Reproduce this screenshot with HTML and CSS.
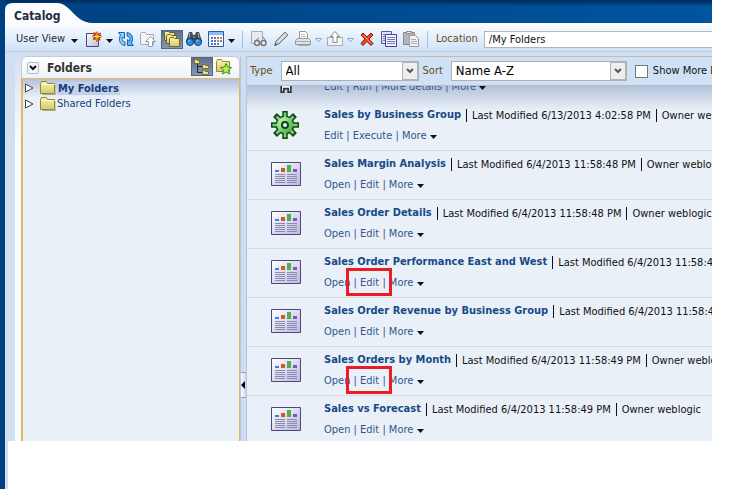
FILE: index.html
```html
<!DOCTYPE html>
<html lang="en">
<head>
<meta charset="utf-8">
<title>Catalog</title>
<link rel="stylesheet" href="styles.css">
</head>
<body>
<svg class="defs" aria-hidden="true">
  <defs>
    <linearGradient id="gPage" x1="0" y1="0" x2="1" y2="1"><stop offset="0" stop-color="#fff"/><stop offset="1" stop-color="#b9b9dc"/></linearGradient>
    <linearGradient id="gGear" x1="0" y1="0" x2="1" y2="1"><stop offset="0" stop-color="#d5fbc8"/><stop offset="1" stop-color="#35a535"/></linearGradient>
    <linearGradient id="gFold" x1="0" y1="0" x2="0" y2="1"><stop offset="0" stop-color="#f8f3b4"/><stop offset="1" stop-color="#d3cb6c"/></linearGradient>
    <symbol id="caret" viewBox="0 0 7 4"><path d="M0 0h7L3.5 4z" fill="#111"/></symbol>
    <symbol id="caret-off" viewBox="0 0 7 5"><path d="M.5 .5h6L3.5 4z" fill="#e8f1fc" stroke="#8ea6cf"/></symbol>
    <symbol id="folder" viewBox="0 0 16 14"><path d="M.5 12.5V2.500l1-2h5l1 2h7v10z" fill="url(#gFold)" stroke="#938a2c"/><path d="M1.500 3.500h13" stroke="#fffbd0"/><path d="M2 13.500h14V4" fill="none" stroke="#77713f" stroke-opacity=".5"/></symbol>
    <symbol id="report" viewBox="0 0 30 24">
      <path d="M.5 .5h29v23H.5z" fill="url(#gPage)" stroke="#494980"/>
      <path d="M4 8h4v2H4z" fill="#3d7df0"/><path d="M10 6h4v4h-4z" fill="#cf5b22"/><path d="M16 3h4v7h-4z" fill="#4bb24b"/><path d="M22 7h4v3h-4z" fill="#8351c7"/>
      <path d="M4 12.500h10M4 14.500h10M4 16.500h10M4 18.500h10M4 20.500h10M16 12.500h10M16 14.500h10M16 16.500h10M16 18.500h10M16 20.500h10" stroke="#8c88b8"/>
    </symbol>
    <symbol id="gear" viewBox="0 0 28 28">
      <g stroke="#0d4a12" stroke-width="5.500"><path d="M14 0v28M0 14h28M4 4l20 20M24 4L4 24"/></g>
      <circle cx="14" cy="14" r="9.500" fill="#0d4a12"/>
      <g stroke="#6fd463" stroke-width="2.500"><path d="M14 1.500v25M1.500 14h25M5.500 5.500l17 17M22.500 5.500l-17 17"/></g>
      <circle cx="14" cy="14" r="8" fill="url(#gGear)"/>
      <circle cx="14" cy="14" r="3" fill="#e9f0f8" stroke="#0d4a12" stroke-width="2"/>
    </symbol>
    <symbol id="new" viewBox="0 0 16 16"><path d="M.5 2.500h12v13H.5z" fill="url(#gPage)" stroke="#494970"/><path d="M11 0l1.500 2.500L15 1.500 14.500 4 16 5.500l-2 1.500.5 2.500-2.500-.5-1.500 2-1-2.500L7 9l.5-2.500L6 5l2-1.500L7.500 1 10 2z" fill="#b8320f"/><path d="M11 1.500v8M7 5.500h8M9 3.500l4 4M13 3.500l-4 4" stroke="#ffd83a"/></symbol>
    <symbol id="refresh" viewBox="0 0 16 16"><path d="M.5 1.500h6v6l-2-1.500c-1 2-.5 4 2.500 5v3.500C2 14 0 9 2.500 4z" fill="#8fd0fb" stroke="#1464b5"/><path d="M15.500 14.500h-6v-6l2 1.500c1-2 .5-4-2.500-5V1.500C14 2 16 7 13.500 12z" fill="#5fb2f3" stroke="#1464b5"/></symbol>
    <symbol id="up-folder" viewBox="0 0 16 16"><path d="M.5 13.500v-11l1-1h4l1 2h7v10z" fill="#f4f5f7" stroke="#a8abb0"/><path d="M10.500 5.500l5 5h-3v5h-4v-5h-3z" fill="#fff" stroke="#999ca1"/></symbol>
    <symbol id="folders" viewBox="0 0 16 16"><g fill="url(#gFold)" stroke="#6b641c"><path d="M.5 9.500v-8l1-1h3l1 1h5v8z"/><path d="M2.500 12.500v-8l1-1h3l1 1h5v8z"/><path d="M5.500 15.500v-8l1-1h3l1 1h5v8z"/></g></symbol>
    <symbol id="binoculars" viewBox="0 0 16 16"><path d="M3 1h3l1 3h2l1-3h3l3 9-2 3H9L8 9l-1 4H2l-2-3z" fill="#44484f"/><path d="M4 2l-1 5M12 2l1 5M7 6h2" stroke="#a5abb5"/><circle cx="4" cy="11" r="3.500" fill="#2990e6" stroke="#14375f"/><circle cx="12" cy="11" r="3.500" fill="#2990e6" stroke="#14375f"/><path d="M2.500 10l1.500-1M10.500 10l1.500-1" stroke="#b5e0ff"/></symbol>
    <symbol id="calendar" viewBox="0 0 16 16"><path d="M.5 .5h15v15H.5z" fill="#f7fbff" stroke="#345b9f"/><path d="M1 1h14v3H1z" fill="#8bbcf2"/><path d="M3 6h2v2H3zM3 9h2v2H3zM6 12h2v2H6z" fill="#4a78df"/><path d="M6 6h2v2H6zM6 9h2v2H6zM3 12h2v2H3z" fill="#6a6ad5"/><path d="M9 6h2v2H9zM12 6h2v2h-2zM9 9h2v2H9z" fill="#ef6e2e"/><path d="M12 9h2v2h-2zM9 12h2v2H9z" fill="#3ca6a0"/></symbol>
    <symbol id="preview" viewBox="0 0 16 16"><path d="M.5 .5h11v12H.5z" fill="#e9ebee" stroke="#aaadb2"/><path d="M4 10l4-3M15 10l-3-4" stroke="#777"/><circle cx="6" cy="12" r="2.500" fill="#eee" stroke="#777" stroke-width="1.500"/><circle cx="12.500" cy="12" r="2.500" fill="#eee" stroke="#777" stroke-width="1.500"/></symbol>
    <symbol id="pencil" viewBox="0 0 16 16"><path d="M2 14l1-4 9-9 3 3-9 9z" fill="#c6c8cb" stroke="#777"/><path d="M5 11l8-8" stroke="#f3f3f3"/><path d="M1 15l1.500-3 1.500 2z" fill="#444"/></symbol>
    <symbol id="print" viewBox="0 0 16 16"><path d="M4.500 8V.5h6l2 2V8z" fill="#fff" stroke="#999"/><path d="M6 3.500h4M6 5.500h5" stroke="#bbb"/><path d="M.5 13.500v-4l2-2h11l2 2v4z" fill="#e0e1e3" stroke="#999"/><path d="M1 10.500h14M3 14.500h12" stroke="#aaa"/></symbol>
    <symbol id="upload" viewBox="0 0 16 16"><path d="M.5 14.500v-8h15v8z" fill="#f2f2f2" stroke="#aaa"/><path d="M8 .5l4.500 5h-2.500v6H6v-6H3.500z" fill="#fff" stroke="#888"/></symbol>
    <symbol id="delete" viewBox="0 0 16 16"><path d="M2 4l2-2 4 4 4-4 2 2-4 4 4 4.500L12 14.500l-4-4-4 4-2-2L6 8z" fill="#f5451e" stroke="#8e150a"/><path d="M4 4l8 8" stroke="#ff9a75"/></symbol>
    <symbol id="copy" viewBox="0 0 16 16"><path d="M.5 .5h10v12H.5z" fill="#dfe0f6" stroke="#5657a0"/><path d="M4.500 3.500h11v12h-11z" fill="#f3f3ff" stroke="#45468f"/><path d="M2 3.500h2M2 5.500h2M2 7.500h2M2 9.500h2M6 6.500h8M6 8.500h8M6 10.500h8M6 12.500h8" stroke="#7778b8"/></symbol>
    <symbol id="paste" viewBox="0 0 16 16"><path d="M.5 1.500h11v12H.5z" fill="#b5b7ba" stroke="#888"/><path d="M3.500 .5h5v2h-5z" fill="#eee" stroke="#888"/><path d="M6.500 4.500h6l3 3v8h-9z" fill="#f3f3f3" stroke="#999"/><path d="M8 8.500h5M8 10.500h6M8 12.500h6" stroke="#aaa"/></symbol>
    <symbol id="tree" viewBox="0 0 16 16"><path d="M3.500 5v8.500H9M3.500 7.500H9" fill="none" stroke="#20283a"/><g fill="#e9e291" stroke="#777022"><path d="M.5 4.500v-4h2l1 1h2v3z"/><path d="M8.500 9.500v-4h2l1 1h3v3z"/><path d="M8.500 15.500v-4h2l1 1h3v3z"/></g></symbol>
    <symbol id="fav" viewBox="0 0 16 16"><path d="M.5 12.500v-10l1-2h4l1 2h7v10z" fill="url(#gFold)" stroke="#938a2c"/><path d="M10 4.500l1.500 3.500 4 .5-3 2.500 1 4-3.500-2-3.500 2 1-4-3-2.500 4-.5z" fill="#b5ef55" stroke="#3f8c1c"/></symbol>
    <symbol id="chev" viewBox="0 0 8 6"><path d="M1 1l3 3 3-3" fill="none" stroke="currentColor" stroke-width="2"/></symbol>
    <symbol id="expand" viewBox="0 0 9 10"><path d="M.5 1v8L8 5z" fill="#fff" stroke="#444"/></symbol>
    <symbol id="home" viewBox="0 0 14 16"><path d="M1.500 15V6L7 1l5.500 5v9h-3v-4h-5v4z" fill="#fff" stroke="#333" stroke-width="2"/></symbol>
  </defs>
</svg>

<div class="app">
  <header class="banner"><h1 class="tab"><svg class="tab-shape" viewBox="0 0 86 20" preserveAspectRatio="none" aria-hidden="true"><path d="M0 20V7Q0 0 8 0H52C65 0 70 19 86 20z" fill="#fcfdff"/></svg><span>Catalog</span></h1></header>

  <div class="toolbar">
    <button class="user-view">User View <svg class="caret"><use href="#caret"/></svg></button>
    <button class="tool" aria-label="New"><svg><use href="#new"/></svg></button>
    <button class="drop" aria-label="New options"><svg class="caret"><use href="#caret"/></svg></button>
    <button class="tool" aria-label="Refresh"><svg><use href="#refresh"/></svg></button>
    <button class="tool" aria-label="Up"><svg><use href="#up-folder"/></svg></button>
    <button class="tool pressed" aria-label="Folders"><svg><use href="#folders"/></svg></button>
    <button class="tool" aria-label="Search"><svg><use href="#binoculars"/></svg></button>
    <button class="tool" aria-label="View"><svg><use href="#calendar"/></svg></button>
    <button class="drop" aria-label="View options"><svg class="caret"><use href="#caret"/></svg></button>
    <span class="rule"></span>
    <button class="tool" aria-label="Preview"><svg><use href="#preview"/></svg></button>
    <button class="tool" aria-label="Edit"><svg><use href="#pencil"/></svg></button>
    <button class="tool" aria-label="Print"><svg><use href="#print"/></svg></button>
    <button class="drop" aria-label="Print options"><svg class="caret-off"><use href="#caret-off"/></svg></button>
    <button class="tool" aria-label="Export"><svg><use href="#upload"/></svg></button>
    <button class="drop" aria-label="Export options"><svg class="caret-off"><use href="#caret-off"/></svg></button>
    <button class="tool" aria-label="Delete"><svg><use href="#delete"/></svg></button>
    <button class="tool" aria-label="Copy"><svg><use href="#copy"/></svg></button>
    <button class="tool" aria-label="Paste"><svg><use href="#paste"/></svg></button>
    <span class="rule"></span>
    <label class="label" for="location">Location</label>
    <input class="location" id="location" type="text" value="/My Folders">
  </div>

  <div class="workspace">
    <aside class="sidebar">
      <div class="side-head">
        <button class="collapse" aria-label="Collapse"><svg><use href="#chev"/></svg></button>
        <h2>Folders</h2>
        <button class="tool pressed" aria-label="Tree"><svg><use href="#tree"/></svg></button>
        <button class="tool" aria-label="Favorites"><svg><use href="#fav"/></svg></button>
      </div>
      <nav class="tree">
        <a class="node selected" href="#my"><svg class="expand"><use href="#expand"/></svg><svg class="folder"><use href="#folder"/></svg><span>My Folders</span></a>
        <a class="node" href="#shared"><svg class="expand"><use href="#expand"/></svg><svg class="folder"><use href="#folder"/></svg><span>Shared Folders</span></a>
      </nav>
    </aside>

    <div class="splitter"><button class="grip" aria-label="Hide folders"><svg viewBox="0 0 4 8"><path d="M4 0v8L0 4z"/></svg></button></div>

    <main class="content">
      <div class="filters">
        <label class="label" for="type">Type</label>
        <span class="select type"><select id="type"><option>All</option></select><span class="select-arrow"><svg><use href="#chev"/></svg></span></span>
        <label class="label" for="sort">Sort</label>
        <span class="select sort"><select id="sort"><option>Name A-Z</option></select><span class="select-arrow"><svg><use href="#chev"/></svg></span></span>
        <input class="check" id="details" type="checkbox"><label class="check-label" for="details">Show More Details</label>
      </div>

      <div class="list-view">
      <ul class="list">
        <li class="item partial"><svg class="home"><use href="#home"/></svg><div class="info"><p class="links"><a href="#">Edit</a> | <a href="#">Run</a> | <a href="#">More details</a> | <a href="#">More <svg class="more"><use href="#caret"/></svg></a></p></div></li>
        <li class="item"><svg class="gear"><use href="#gear"/></svg><div class="info"><p class="title"><a href="#">Sales by Business Group</a><span>Last Modified 6/13/2013 4:02:58 PM</span><span>Owner weblogic</span></p><p class="links"><a href="#">Edit</a> | <a href="#">Execute</a> | <a href="#">More <svg class="more"><use href="#caret"/></svg></a></p></div></li>
        <li class="item"><svg class="report"><use href="#report"/></svg><div class="info"><p class="title"><a href="#">Sales Margin Analysis</a><span>Last Modified 6/4/2013 11:58:48 PM</span><span>Owner weblogic</span></p><p class="links"><a href="#">Open</a> | <a href="#">Edit</a> | <a href="#">More <svg class="more"><use href="#caret"/></svg></a></p></div></li>
        <li class="item"><svg class="report"><use href="#report"/></svg><div class="info"><p class="title"><a href="#">Sales Order Details</a><span>Last Modified 6/4/2013 11:58:48 PM</span><span>Owner weblogic</span></p><p class="links"><a href="#">Open</a> | <a href="#">Edit</a> | <a href="#">More <svg class="more"><use href="#caret"/></svg></a></p></div></li>
        <li class="item"><svg class="report"><use href="#report"/></svg><div class="info"><p class="title"><a href="#">Sales Order Performance East and West</a><span>Last Modified 6/4/2013 11:58:49 PM</span><span>Owner weblogic</span></p><p class="links"><a href="#">Open</a> | <a class="marked" href="#">Edit</a> | <a href="#">More <svg class="more"><use href="#caret"/></svg></a></p></div></li>
        <li class="item"><svg class="report"><use href="#report"/></svg><div class="info"><p class="title"><a href="#">Sales Order Revenue by Business Group</a><span>Last Modified 6/4/2013 11:58:49 PM</span><span>Owner weblogic</span></p><p class="links"><a href="#">Open</a> | <a href="#">Edit</a> | <a href="#">More <svg class="more"><use href="#caret"/></svg></a></p></div></li>
        <li class="item"><svg class="report"><use href="#report"/></svg><div class="info"><p class="title"><a href="#">Sales Orders by Month</a><span>Last Modified 6/4/2013 11:58:49 PM</span><span>Owner weblogic</span></p><p class="links"><a href="#">Open</a> | <a class="marked" href="#">Edit</a> | <a href="#">More <svg class="more"><use href="#caret"/></svg></a></p></div></li>
        <li class="item last"><svg class="report"><use href="#report"/></svg><div class="info"><p class="title"><a href="#">Sales vs Forecast</a><span>Last Modified 6/4/2013 11:58:49 PM</span><span>Owner weblogic</span></p><p class="links"><a href="#">Open</a> | <a href="#">Edit</a> | <a href="#">More <svg class="more"><use href="#caret"/></svg></a></p></div></li>
      </ul>
      </div>
    </main>
  </div>
  <footer class="foot"></footer>
</div>
</body>
</html>
```
FILE: styles.css
```css
* { box-sizing: border-box; }
body { margin: 0; background: #fff; font: 11px/16px "DejaVu Sans Condensed", "DejaVu Sans", sans-serif; color: #111; overflow: hidden; }
h1, h2, p, ul { margin: 0; padding: 0; list-style: none; }
a { color: #34568c; text-decoration: none; }
button { border: 0; padding: 0; background: none; font: inherit; color: inherit; }
svg { display: block; flex: none; }
.defs { position: absolute; width: 0; height: 0; }

.app { margin-right: 26px; border-left: 5px solid #004080; background: #d0dff2; overflow: hidden; }
.banner { height: 23px; padding-top: 3px; background: linear-gradient(#002a5c, #00468a 5px, #00468a00 6px), linear-gradient(90deg, #004080, #00559f); }
.tab { position: relative; width: 86px; height: 20px; font-size: 12px; line-height: 26px; color: #222c3c; padding-left: 9px; }
.tab-shape { position: absolute; inset: 0; width: 100%; height: 100%; }
.tab span { position: relative; }

.toolbar { display: flex; align-items: center; gap: 6px; height: 29px; padding: 4px 0 0 11px; background: linear-gradient(#fcfdff, #e4f0fd 50%, #cfe2f8); border-bottom: 1px solid #bcc8dc; white-space: nowrap; overflow: hidden; }
.user-view { display: flex; align-items: center; justify-content: space-between; width: 62px; margin-right: 2px; color: #222c3c; }
.caret { width: 7px; height: 4px; margin-top: 3px; }
.caret-off { width: 7px; height: 5px; margin-top: 3px; }
.drop { width: 6px; margin-left: -2px; flex: none; }
.tool { display: flex; align-items: center; justify-content: center; width: 16px; height: 19px; flex: none; }
.tool svg { width: 16px; height: 16px; }
.pressed { width: 22px; background: linear-gradient(#5f6f8c, #8797b3); border: 1px solid #56657f; margin: 0 -3px 0 -1px; }
.rule { width: 1px; height: 17px; margin: 0 2px; background: #a9bcd8; flex: none; }
.label { color: #6b4f18; }
.location { flex: 1; min-width: 0; height: 17px; padding: 0 4px; border: 1px solid #b5b5b5; border-right: 0; background: #fff; font: inherit; color: #111; }

.workspace { display: flex; height: 389px; margin-left: 10px; padding-top: 4px; background: linear-gradient(#d5dff0, #d0dff2); border-top-left-radius: 6px; }
.sidebar { display: flex; flex-direction: column; width: 225px; padding-left: 6px; background: linear-gradient(#d9e1ef, #fbfcfe 90px); border-top-left-radius: 6px; flex: none; }
.side-head { display: flex; align-items: center; gap: 6px; height: 22px; padding: 0 7px 0 5px; border: 1px solid #c3cbd9; border-bottom: 0; border-radius: 6px 6px 0 0; background: linear-gradient(#fff, #edf2f9); }
.side-head h2 { flex: 1; font-size: 12px; line-height: 16px; color: #333; padding-left: 2px; }
.side-head .tool { margin-bottom: 2px; }
.collapse { display: flex; align-items: center; justify-content: center; width: 12px; height: 12px; border: 1px solid #b0bccd; border-radius: 2px; background: #f2f6fc; }
.collapse svg { width: 8px; height: 6px; }
.tree { flex: 1; padding: 1px 2px; border: solid #e0b862; border-width: 1px 1px 0 2px; background: linear-gradient(#b4c1da, #e9f0f8 18px); }
.node { display: flex; align-items: center; height: 16px; color: #163c7c; }
.expand { width: 9px; height: 10px; margin-right: 6px; }
.folder { width: 16px; height: 14px; margin-right: 1px; }
.selected { font-weight: bold; }
.selected span { background: #c3d2e8; line-height: 13px; padding: 0 1px; }

.splitter { display: flex; align-items: flex-start; width: 7px; border: solid #b9c4d8; border-width: 0 1px; background: #cfdef3; flex: none; }
.grip { display: flex; align-items: center; width: 5px; height: 26px; margin-top: 316px; border: solid #8ea2c2; border-width: 1px 0; background: linear-gradient(90deg, #fff, #c9d6ea); }
.grip svg { width: 4px; height: 8px; }

.content { display: flex; flex-direction: column; flex: 1; min-width: 0; }
.filters { display: flex; align-items: center; height: 30px; padding-left: 3px; border: solid #b9bcc0; border-width: 1px 0; background: #cfe1f7; white-space: nowrap; overflow: hidden; flex: none; }
.select { display: flex; position: relative; height: 20px; margin: 0 4px 0 8px; flex: none; }
.type { width: 138px; }
.sort { width: 176px; }
.select select { appearance: none; width: 100%; height: 20px; padding: 0 4px; border: 1px solid #b0b0b0; border-radius: 0; background: #fff; font: 13px/18px "DejaVu Sans Condensed", sans-serif; color: #000; }
.select-arrow { position: absolute; top: 1px; right: 1px; bottom: 1px; display: flex; align-items: center; justify-content: center; width: 16px; border: 1px solid #b5b5b5; background: #eee; color: #555; pointer-events: none; }
.select-arrow svg { width: 8px; height: 6px; }
.check { appearance: none; width: 13px; height: 13px; margin: 0 5px 0 4px; border: 1px solid #777; background: #fff; flex: none; }

.list-view { flex: 1; min-height: 0; overflow: hidden; background: linear-gradient(#b4c1da, #e9f0f8 24px); }
.list { margin-top: -7px; }
.item { display: flex; align-items: flex-start; height: 49px; padding: 11px 0 0 24px; border-bottom: 1px solid #d8dadc; white-space: nowrap; }
.partial { height: 23px; padding-top: 0; border-bottom: 0; }
.report { width: 30px; height: 24px; margin-right: 23px; }
.gear { width: 28px; height: 28px; margin: -2px 25px 0 0; }
.home { width: 14px; height: 14px; margin: 0 31px 0 8px; }
.info { margin-top: -6px; }
.partial .info { margin-top: 0; }
.title { display: flex; align-items: center; height: 16px; margin-bottom: 5px; }
.title a { font-weight: bold; color: #174a86; }
.title span { margin-left: 5px; padding-left: 5px; border-left: 1px solid #111; line-height: 13px; }
.links { color: #34568c; line-height: 16px; }
.more { display: inline-block; width: 7px; height: 4px; vertical-align: 0; }
.marked { position: relative; }
.marked::after { content: ""; position: absolute; inset: -8px -13px -7px -14px; border: 3px solid #ed1c24; }
.foot { height: 48px; margin-left: 3px; background: #fff; }
```
